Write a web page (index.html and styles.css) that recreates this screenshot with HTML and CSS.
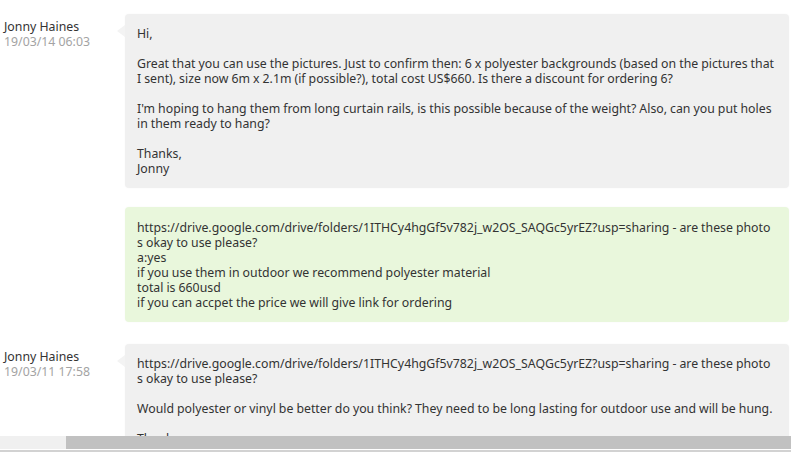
FILE: index.html
```html
<!DOCTYPE html>
<html lang="en">
<head>
  <meta charset="UTF-8" />
  <title>Messages</title>
  <link rel="stylesheet" href="styles.css">
</head>
<body>

<div class="thread">
  <div class="msg">
    <div class="meta">
      <div class="name">Jonny Haines</div>
      <div class="time">19/03/14 06:03</div>
    </div>
    <div class="bubble in">
      <p>Hi,</p>
      <p>Great that you can use the pictures. Just to confirm then: 6 x polyester backgrounds (based on the pictures that I sent), size now 6m x 2.1m (if possible?), total cost US$660. Is there a discount for ordering 6?</p>
      <p>I'm hoping to hang them from long curtain rails, is this possible because of the weight? Also, can you put holes in them ready to hang?</p>
      <p>Thanks,<br>Jonny</p>
    </div>
  </div>

  <div class="msg mine">
    <div class="meta"></div>
    <div class="bubble out">
      <p>https://drive.google.com/drive/folders/1ITHCy4hgGf5v782j_w2OS_SAQGc5yrEZ?usp=sharing - are these photos okay to use please?<br>a:yes<br>if you use them in outdoor we recommend polyester material<br>total is 660usd<br>if you can accpet the price we will give link for ordering</p>
    </div>
  </div>

  <div class="msg">
    <div class="meta">
      <div class="name">Jonny Haines</div>
      <div class="time">19/03/11 17:58</div>
    </div>
    <div class="bubble in">
      <p>https://drive.google.com/drive/folders/1ITHCy4hgGf5v782j_w2OS_SAQGc5yrEZ?usp=sharing - are these photos okay to use please?</p>
      <p>Would polyester or vinyl be better do you think? They need to be long lasting for outdoor use and will be hung.</p>
      <p>Thanks,<br>Jonny</p>
    </div>
  </div>
</div>

<div class="hscroll">
  <div class="thumb"></div>
</div>
<div class="below"></div>

</body>
</html>
```

FILE: styles.css
```css
* { box-sizing: border-box; margin: 0; padding: 0; }

body {
  font-family: "Noto Sans", sans-serif;
  font-size: 12.3px;
  color: #333;
  background: #fff;
}

.thread {
  height: 436px;
  overflow: hidden;
  padding-top: 14px;
}

.msg {
  display: flex;
  align-items: flex-start;
  margin-bottom: 19px;
}

.msg.mine {
  margin-bottom: 22px;
}

.meta {
  width: 125px;
  flex-shrink: 0;
  padding: 5px 0 0 4px;
  line-height: 15px;
}

.time {
  color: #a3a3a3;
}

.bubble {
  position: relative;
  flex: 1;
  margin-right: 2px;
  padding: 12px 13px 12px 12px;
  border-radius: 4px;
  line-height: 15px;
  word-spacing: -0.15px;
  word-break: break-all;
  box-shadow: 0 0 2px rgba(0, 0, 0, 0.04);
}

.bubble p + p {
  margin-top: 15px;
}

.bubble.in {
  background: #f0f0f0;
}

.bubble.in::before {
  content: "";
  position: absolute;
  left: -8px;
  top: 11px;
  border: 6px solid transparent;
  border-right: 8px solid #f3f3f3;
  border-left: 0;
}

.bubble.out {
  background: #e9f7dc;
  padding-top: 13px;
  padding-bottom: 12px;
}

.hscroll {
  height: 13px;
  background: #f0f0f0;
  padding-left: 66px;
}

.thumb {
  height: 100%;
  background: #c1c1c1;
}

.below {
  border-top: 2px solid #d2d2d2;
  margin-top: 1px;
  height: 9px;
}
```
